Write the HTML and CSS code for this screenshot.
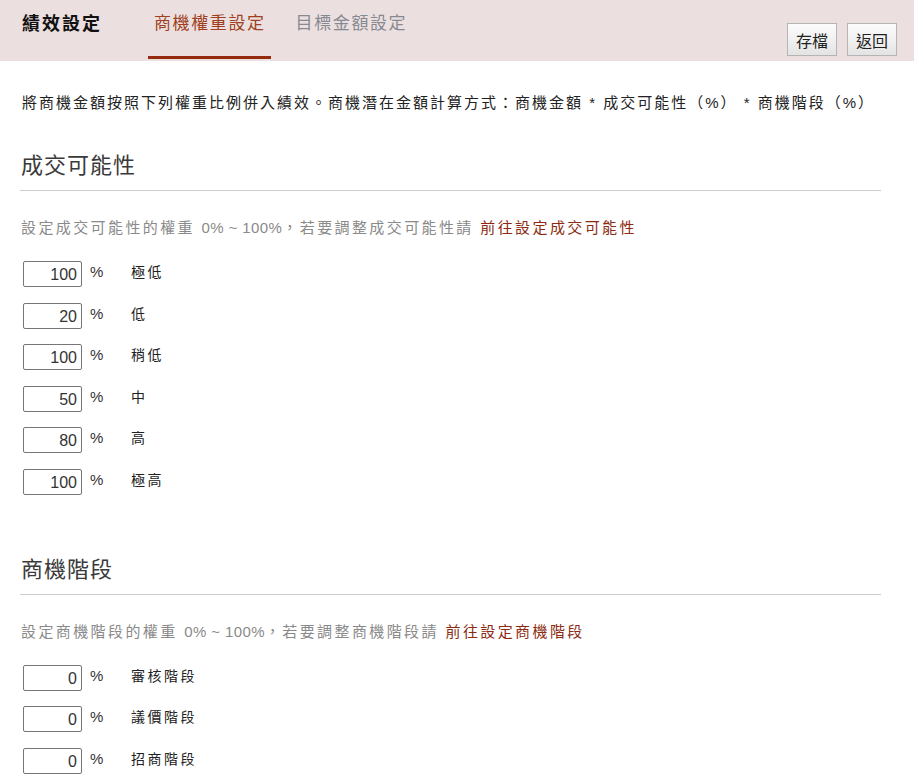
FILE: index.html
```html
<!DOCTYPE html>
<html lang="zh-Hant">
<head>
<meta charset="UTF-8">
<meta name="viewport" content="width=device-width, initial-scale=1.0">
<title>績效設定</title>
<link rel="stylesheet" href="styles.css">
</head>
<body>

<div class="header">
  <div class="page-title">績效設定</div>
  <div class="tabs">
    <a href="#" class="tab active">商機權重設定</a>
    <a href="#" class="tab">目標金額設定</a>
  </div>
  <div class="actions">
    <button type="button" class="btn">存檔</button>
    <button type="button" class="btn">返回</button>
  </div>
</div>

<div class="content">
  <p class="intro">將商機金額按照下列權重比例併入績效。商機潛在金額計算方式：商機金額 * 成交可能性（%） * 商機階段（%）</p>

  <div class="section">
    <h2 class="section-title">成交可能性</h2>
    <p class="hint">設定成交可能性的權重 <span class="num">0% ~ 100%</span>，若要調整成交可能性請 <a href="#" class="hint-link">前往設定成交可能性</a></p>
    <div class="rows">
      <div class="row"><input type="text" class="weight" value="100"><span class="pct">%</span><span class="row-label">極低</span></div>
      <div class="row"><input type="text" class="weight" value="20"><span class="pct">%</span><span class="row-label">低</span></div>
      <div class="row"><input type="text" class="weight" value="100"><span class="pct">%</span><span class="row-label">稍低</span></div>
      <div class="row"><input type="text" class="weight" value="50"><span class="pct">%</span><span class="row-label">中</span></div>
      <div class="row"><input type="text" class="weight" value="80"><span class="pct">%</span><span class="row-label">高</span></div>
      <div class="row"><input type="text" class="weight" value="100"><span class="pct">%</span><span class="row-label">極高</span></div>
    </div>
  </div>

  <div class="section">
    <h2 class="section-title">商機階段</h2>
    <p class="hint">設定商機階段的權重 <span class="num">0% ~ 100%</span>，若要調整商機階段請 <a href="#" class="hint-link">前往設定商機階段</a></p>
    <div class="rows">
      <div class="row"><input type="text" class="weight" value="0"><span class="pct">%</span><span class="row-label">審核階段</span></div>
      <div class="row"><input type="text" class="weight" value="0"><span class="pct">%</span><span class="row-label">議價階段</span></div>
      <div class="row"><input type="text" class="weight" value="0"><span class="pct">%</span><span class="row-label">招商階段</span></div>
    </div>
  </div>
</div>

</body>
</html>
```

FILE: styles.css
```css
body {
  margin: 0;
  font-family: "Liberation Sans", "Noto Sans CJK TC", sans-serif;
  color: #222;
  background-color: #fff;
  text-spacing-trim: space-all;
}
.header {
  display: flex;
  align-items: flex-start;
  height: 61px;
  padding: 0 17px 0 22px;
  background-color: #ecdfdf;
}
.page-title {
  margin-top: 14px;
  font-size: 18px;
  line-height: 20px;
  font-weight: bold;
  letter-spacing: 2px;
  color: #111;
}
.tabs {
  display: flex;
  margin-left: 46px;
}
.tab {
  display: block;
  padding: 14px 5px 22px 6px;
  margin-right: 19px;
  font-size: 17px;
  line-height: 20px;
  letter-spacing: 1.6px;
  color: #858a92;
  text-decoration: none;
  border-bottom: 3px solid transparent;
}
.tab.active {
  color: #9e3f22;
  border-bottom-color: #952a0f;
}
.actions {
  display: flex;
  gap: 10px;
  margin-left: auto;
  margin-top: 23px;
}
.btn {
  width: 50px;
  height: 33px;
  padding: 0;
  font-family: inherit;
  font-size: 16px;
  color: #222;
  background: linear-gradient(#fbfbfb, #f1f1f1 50%, #e3e3e3);
  border: 1px solid #b5b5b5;
  border-radius: 0;
  cursor: pointer;
}
.content {
  padding: 0 33px 0 20px;
}
.intro {
  margin: 32px 0 0 2px;
  font-size: 15px;
  line-height: 20px;
  letter-spacing: 2px;
  color: #222;
}
.section-title {
  margin: 38px 0 0;
  padding: 0 0 9px 1px;
  font-size: 22px;
  line-height: 30px;
  font-weight: normal;
  letter-spacing: 1px;
  color: #3a3a3a;
  border-bottom: 1px solid #cccccc;
}
.section + .section .section-title {
  margin-top: 60px;
}
.hint {
  margin: 27px 0 0 1px;
  font-size: 15px;
  line-height: 20px;
  letter-spacing: 2.4px;
  color: #8a8a8a;
}
.hint .num {
  letter-spacing: 0.4px;
}
.hint-link {
  color: #8c2b12;
  text-decoration: none;
}
.rows {
  display: flex;
  flex-direction: column;
  gap: 15.5px;
  margin-top: 23px;
}
.row {
  display: flex;
  align-items: flex-start;
  height: 26px;
}
.weight {
  box-sizing: border-box;
  width: 59px;
  height: 26px;
  margin: 0 0 0 3px;
  padding: 2px 4px 0 0;
  font-family: "Liberation Sans", sans-serif;
  font-size: 16px;
  text-align: right;
  color: #333;
  border: 1px solid #767676;
  border-radius: 2px;
}
.pct {
  width: 41px;
  margin-left: 8px;
  font-size: 15px;
  line-height: 22px;
  color: #333;
}
.row-label {
  font-size: 14px;
  line-height: 22px;
  letter-spacing: 2.5px;
  color: #222;
}
```
